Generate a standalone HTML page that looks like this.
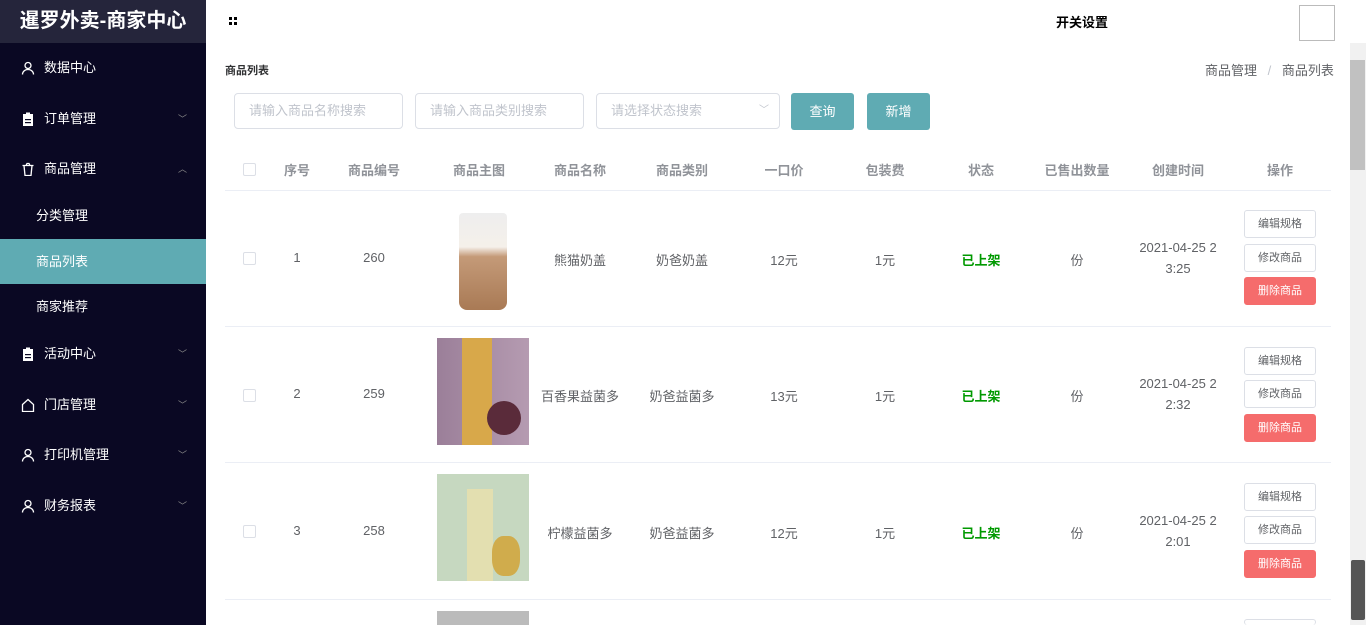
<!DOCTYPE html>
<html style="height:625px;overflow:hidden"><head><meta charset="utf-8"><style>
*{margin:0;padding:0;box-sizing:border-box}
body{width:1366px;height:625px;overflow:hidden;font-family:"Liberation Sans","Noto Sans CJK SC",sans-serif;font-size:13px;color:#606266;background:#fff;position:relative}
.side{position:absolute;left:0;top:0;width:206px;height:625px;background:#0a0823}
.logo{height:43px;background:#25253b;color:#fff;font-size:20px;font-weight:bold;text-align:center;line-height:43px}
.mi{position:absolute;left:0;width:206px;height:50px;color:#fff;font-size:13px;line-height:50px;padding-left:44px}
.mi .ic{position:absolute;left:21px;top:18px;width:14px;height:14px}
.mi .ar{position:absolute;left:178px;top:0;color:#888;font-size:9px}
.sub{position:absolute;left:0;width:206px;height:45px;line-height:45px;padding-left:36px;color:#fff}
.sub.on{background:#5fabb3}
.inp{position:absolute;top:93px;height:36px;border:1px solid #dcdfe6;border-radius:4px;color:#c0c4cc;padding-left:14px;line-height:34px;font-size:13px}
.btn{position:absolute;top:93px;height:37px;width:63px;background:#5fabb3;color:#fff;border-radius:3px;text-align:center;line-height:37px}
.th{position:absolute;top:160px;font-weight:bold;color:#909399;text-align:center}
.line{position:absolute;left:225px;width:1106px;height:1px;background:#ebeef5}
.cell{position:absolute;text-align:center}
.cb{position:absolute;left:243px;width:13px;height:13px;border:1px solid #dcdfe6;border-radius:2px;background:#fff}
.ob{position:absolute;left:1244px;width:72px;height:28px;border:1px solid #dcdfe6;border-radius:3px;font-size:11px;text-align:center;line-height:26px;color:#606266;background:#fff}
.ob.r{background:#f56c6c;border-color:#f56c6c;color:#fff}
.img{position:absolute;left:437px;width:92px;height:107px;overflow:hidden}
</style></head><body>
<div class="side">
<div class="logo">暹罗外卖-商家中心</div>
<div class="mi" style="top:43px"><svg class="ic" viewBox="0 0 14 14" fill="none" stroke="#fff" stroke-width="1.3"><circle cx="7" cy="4.5" r="3"/><path d="M1.5 13.5c0-3 2.5-5 5.5-5s5.5 2 5.5 5"/></svg>数据中心</div>
<div class="mi" style="top:94px"><svg class="ic" viewBox="0 0 14 14"><rect x="2" y="2" width="10" height="12" fill="#fff"/><rect x="5" y="0.5" width="4" height="2.5" fill="#fff"/><rect x="4" y="7" width="6" height="1.2" fill="#0a0823"/><rect x="4" y="10" width="6" height="1.2" fill="#0a0823"/></svg>订单管理<span class="ar">﹀</span></div>
<div class="mi" style="top:144px"><svg class="ic" viewBox="0 0 14 14" fill="none" stroke="#fff" stroke-width="1.3"><path d="M1.5 3.5h11M3 3.5l1 10h6l1-10M5 3.5l1-2h2l1 2"/></svg>商品管理<span class="ar">︿</span></div>
<div class="sub" style="top:193px">分类管理</div>
<div class="sub on" style="top:239px">商品列表</div>
<div class="sub" style="top:284px">商家推荐</div>
<div class="mi" style="top:329px"><svg class="ic" viewBox="0 0 14 14"><rect x="2" y="2" width="10" height="12" fill="#fff"/><rect x="5" y="0.5" width="4" height="2.5" fill="#fff"/><rect x="4" y="7" width="6" height="1.2" fill="#0a0823"/><rect x="4" y="10" width="6" height="1.2" fill="#0a0823"/></svg>活动中心<span class="ar">﹀</span></div>
<div class="mi" style="top:380px"><svg class="ic" viewBox="0 0 14 14" fill="none" stroke="#fff" stroke-width="1.3"><path d="M1.5 6.5L7 1.5l5.5 5v7h-11z"/></svg>门店管理<span class="ar">﹀</span></div>
<div class="mi" style="top:430px"><svg class="ic" viewBox="0 0 14 14" fill="none" stroke="#fff" stroke-width="1.3"><circle cx="7" cy="4.5" r="3"/><path d="M1.5 13.5c0-3 2.5-5 5.5-5s5.5 2 5.5 5"/></svg>打印机管理<span class="ar">﹀</span></div>
<div class="mi" style="top:481px"><svg class="ic" viewBox="0 0 14 14" fill="none" stroke="#fff" stroke-width="1.3"><circle cx="7" cy="4.5" r="3"/><path d="M1.5 13.5c0-3 2.5-5 5.5-5s5.5 2 5.5 5"/></svg>财务报表<span class="ar">﹀</span></div>
</div>
<svg style="position:absolute;left:229px;top:17px" width="8" height="8"><rect x="0" y="0" width="3" height="3"/><rect x="5" y="0" width="3" height="3"/><rect x="0" y="5" width="3" height="3"/><rect x="5" y="5" width="3" height="3"/></svg>
<div style="position:absolute;left:1056px;top:12px;font-weight:bold;color:#000;font-size:13px">开关设置</div>
<div style="position:absolute;left:1299px;top:5px;width:36px;height:36px;border:1px solid #bbb"></div>
<div style="position:absolute;left:1350px;top:43px;width:16px;height:582px;background:#f1f1f1"><div style="position:absolute;left:0;top:17px;width:15px;height:110px;background:#c1c1c1"></div><div style="position:absolute;left:1px;top:517px;width:14px;height:60px;background:#555;border-radius:2px"></div></div>
<div style="position:absolute;left:225px;top:62px;font-size:11px;font-weight:bold;color:#303133">商品列表</div>
<div style="position:absolute;left:1205px;top:60px;font-size:13px;color:#606266">商品管理 <span style="color:#c0c4cc;margin:0 7px">/</span> 商品列表</div>
<div class="inp" style="left:234px;width:169px">请输入商品名称搜索</div>
<div class="inp" style="left:415px;width:169px">请输入商品类别搜索</div>
<div class="inp" style="left:596px;width:184px">请选择状态搜索<span style="position:absolute;right:10px;color:#c0c4cc;font-size:10px">﹀</span></div>
<div class="btn" style="left:791px">查询</div>
<div class="btn" style="left:867px">新增</div>
<div class="cb" style="top:163px"></div>
<div class="th" style="left:277px;width:40px">序号</div>
<div class="th" style="left:334px;width:80px">商品编号</div>
<div class="th" style="left:439px;width:80px">商品主图</div>
<div class="th" style="left:540px;width:80px">商品名称</div>
<div class="th" style="left:642px;width:80px">商品类别</div>
<div class="th" style="left:744px;width:80px">一口价</div>
<div class="th" style="left:845px;width:80px">包装费</div>
<div class="th" style="left:941px;width:80px">状态</div>
<div class="th" style="left:1037px;width:80px">已售出数量</div>
<div class="th" style="left:1138px;width:80px">创建时间</div>
<div class="th" style="left:1240px;width:80px">操作</div>
<div class="line" style="top:190px"></div>
<div class="line" style="top:326px"></div>
<div class="line" style="top:462px"></div>
<div class="line" style="top:599px"></div>

<div class="cb" style="top:252px"></div>
<div class="cell" style="left:277px;width:40px;top:250px">1</div>
<div class="cell" style="left:334px;width:80px;top:250px">260</div>
<div class="img" style="top:203px;background:#fff"><div style="position:absolute;left:22px;top:10px;width:48px;height:97px;background:linear-gradient(#eee 0,#f5f0ea 35%,#c49a78 45%,#a97a55 100%);border-radius:4px 4px 8px 8px"></div></div>
<div class="cell" style="left:540px;width:80px;top:250px">熊猫奶盖</div>
<div class="cell" style="left:642px;width:80px;top:250px">奶爸奶盖</div>
<div class="cell" style="left:744px;width:80px;top:250px">12元</div>
<div class="cell" style="left:845px;width:80px;top:250px">1元</div>
<div class="cell" style="left:941px;width:80px;top:250px;color:#090;font-weight:bold">已上架</div>
<div class="cell" style="left:1037px;width:80px;top:250px">份</div>
<div class="cell" style="left:1133px;width:90px;top:237px;line-height:21px">2021-04-25 2<br>3:25</div>
<div class="ob" style="top:210px">编辑规格</div>
<div class="ob" style="top:244px">修改商品</div>
<div class="ob r" style="top:277px">删除商品</div>

<div class="cb" style="top:389px"></div>
<div class="cell" style="left:277px;width:40px;top:386px">2</div>
<div class="cell" style="left:334px;width:80px;top:386px">259</div>
<div class="img" style="top:338px;background:linear-gradient(90deg,#9b7f99,#b59bb1)"><div style="position:absolute;left:25px;top:0;width:30px;height:107px;background:#d8a84a"></div><div style="position:absolute;left:50px;top:63px;width:34px;height:34px;border-radius:50%;background:#5a2b3a"></div></div>
<div class="cell" style="left:535px;width:90px;top:386px">百香果益菌多</div>
<div class="cell" style="left:637px;width:90px;top:386px">奶爸益菌多</div>
<div class="cell" style="left:744px;width:80px;top:386px">13元</div>
<div class="cell" style="left:845px;width:80px;top:386px">1元</div>
<div class="cell" style="left:941px;width:80px;top:386px;color:#090;font-weight:bold">已上架</div>
<div class="cell" style="left:1037px;width:80px;top:386px">份</div>
<div class="cell" style="left:1133px;width:90px;top:373px;line-height:21px">2021-04-25 2<br>2:32</div>
<div class="ob" style="top:347px">编辑规格</div>
<div class="ob" style="top:380px">修改商品</div>
<div class="ob r" style="top:414px">删除商品</div>

<div class="cb" style="top:525px"></div>
<div class="cell" style="left:277px;width:40px;top:523px">3</div>
<div class="cell" style="left:334px;width:80px;top:523px">258</div>
<div class="img" style="top:474px;background:#c6d8c0"><div style="position:absolute;left:30px;top:15px;width:26px;height:92px;background:#e3dfb0"></div><div style="position:absolute;left:55px;top:62px;width:28px;height:40px;border-radius:40%;background:#d0ac4c"></div></div>
<div class="cell" style="left:540px;width:80px;top:523px">柠檬益菌多</div>
<div class="cell" style="left:637px;width:90px;top:523px">奶爸益菌多</div>
<div class="cell" style="left:744px;width:80px;top:523px">12元</div>
<div class="cell" style="left:845px;width:80px;top:523px">1元</div>
<div class="cell" style="left:941px;width:80px;top:523px;color:#090;font-weight:bold">已上架</div>
<div class="cell" style="left:1037px;width:80px;top:523px">份</div>
<div class="cell" style="left:1133px;width:90px;top:510px;line-height:21px">2021-04-25 2<br>2:01</div>
<div class="ob" style="top:483px">编辑规格</div>
<div class="ob" style="top:516px">修改商品</div>
<div class="ob r" style="top:550px">删除商品</div>

<div class="img" style="top:611px;height:14px;background:#bbb"></div>
<div class="ob" style="top:619px;height:6px;border-bottom:none"></div>
</body></html>
